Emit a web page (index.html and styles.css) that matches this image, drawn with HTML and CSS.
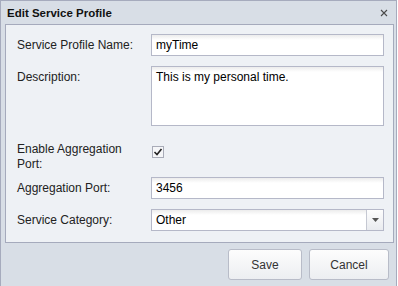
FILE: index.html
```html
<!DOCTYPE html>
<html lang="en">
<head>
    <meta charset="UTF-8">
    <title>Edit Service Profile</title>
    <link rel="stylesheet" href="styles.css">
</head>
<body>
    <div class="window">
        <div class="window-header">
            <span class="window-title">Edit Service Profile</span>
            <span class="close-btn">
                <svg width="8" height="8" viewBox="0 0 8 8"><path d="M1 1 L7 7 M7 1 L1 7" stroke="#4a4a4a" stroke-width="1.1"/></svg>
            </span>
        </div>
        <div class="panel">
            <div class="row">
                <label class="field-label">Service Profile Name:</label>
                <div class="text-field">myTime</div>
            </div>
            <div class="row row-top">
                <label class="field-label">Description:</label>
                <div class="text-field text-area">This is my personal time.</div>
            </div>
            <div class="row row-top row-check">
                <label class="field-label two-line">Enable Aggregation Port:</label>
                <div class="checkbox">
                    <svg width="10" height="10" viewBox="0 0 10 10"><path d="M1.5 5 L4 7.5 L8.5 2" stroke="#222" stroke-width="1.6" fill="none"/></svg>
                </div>
            </div>
            <div class="row">
                <label class="field-label">Aggregation Port:</label>
                <div class="text-field">3456</div>
            </div>
            <div class="row">
                <label class="field-label">Service Category:</label>
                <div class="combo">
                    <div class="combo-value">Other</div>
                    <div class="combo-trigger">
                        <svg width="7" height="4" viewBox="0 0 7 4"><path d="M0 0 L7 0 L3.5 4 Z" fill="#555"/></svg>
                    </div>
                </div>
            </div>
        </div>
        <div class="footer">
            <button class="btn btn-save">Save</button>
            <button class="btn btn-cancel">Cancel</button>
        </div>
    </div>
</body>
</html>
```

FILE: styles.css
```css
* {
    margin: 0;
    padding: 0;
    box-sizing: border-box;
}
body {
    font-family: 'Liberation Sans', Arial, sans-serif;
    font-size: 12px;
    color: #111;
    background: #fff;
    width: 398px;
    height: 286px;
    overflow: hidden;
}
.window {
    width: 397px;
    height: 290px;
    background: #d8dee6;
    border: 1px solid #a6abbd;
    border-bottom: none;
}
.window-header {
    height: 23px;
    display: flex;
    align-items: center;
    justify-content: space-between;
    padding: 0 8px 0 6px;
}
.window-title {
    font-weight: bold;
    font-size: 11.5px;
    color: #111;
}
.close-btn {
    display: flex;
    margin-top: 1px;
}
.panel {
    margin: 0 2px 0 4px;
    height: 219px;
    background: #eef1f5;
    border: 1px solid #a5aabc;
    padding: 9px 9px 0 11px;
}
.row {
    display: flex;
    align-items: center;
    margin-bottom: 10px;
}
.row-top {
    align-items: flex-start;
}
.row-check {
    height: 32px;
    margin-bottom: 9px;
}
.field-label {
    width: 134px;
    flex-shrink: 0;
    color: #222;
    line-height: 15px;
    padding-top: 1px;
}
.row-top .field-label {
    padding-top: 4px;
}
.row-check .field-label {
    padding-top: 6px;
}
.two-line {
    width: 118px;
    margin-right: 16px;
}
.text-field {
    width: 233px;
    height: 22px;
    border: 1px solid #b5b8c8;
    background: linear-gradient(#ececec, #fff 5px);
    padding: 3px 4px;
    line-height: 14px;
    color: #000;
}
.text-area {
    height: 60px;
}
.checkbox {
    width: 12px;
    height: 12px;
    margin-top: 10px;
    margin-left: 1px;
    border: 1px solid #a9acb8;
    background: #f5f6f8;
    display: flex;
    align-items: center;
    justify-content: center;
}
.combo {
    width: 233px;
    height: 22px;
    display: flex;
    border: 1px solid #b5b8c8;
    background: linear-gradient(#ececec, #fff 5px);
}
.combo-value {
    flex: 1;
    padding: 3px 4px;
    line-height: 14px;
    color: #000;
}
.combo-trigger {
    width: 17px;
    border-left: 1px solid #c5c8d2;
    background: linear-gradient(#fdfdfd, #e9ebef);
    display: flex;
    align-items: center;
    justify-content: center;
}
.footer {
    display: flex;
    justify-content: flex-end;
    gap: 7px;
    padding: 6px 7px 0 0;
}
.btn {
    height: 31px;
    font-family: 'Liberation Sans', Arial, sans-serif;
    font-size: 12px;
    color: #333;
    border: 1px solid #b8bcc8;
    border-radius: 3px;
    background: linear-gradient(#fdfdfd, #eceef1);
}
.btn-save {
    width: 74px;
}
.btn-cancel {
    width: 80px;
}
```
